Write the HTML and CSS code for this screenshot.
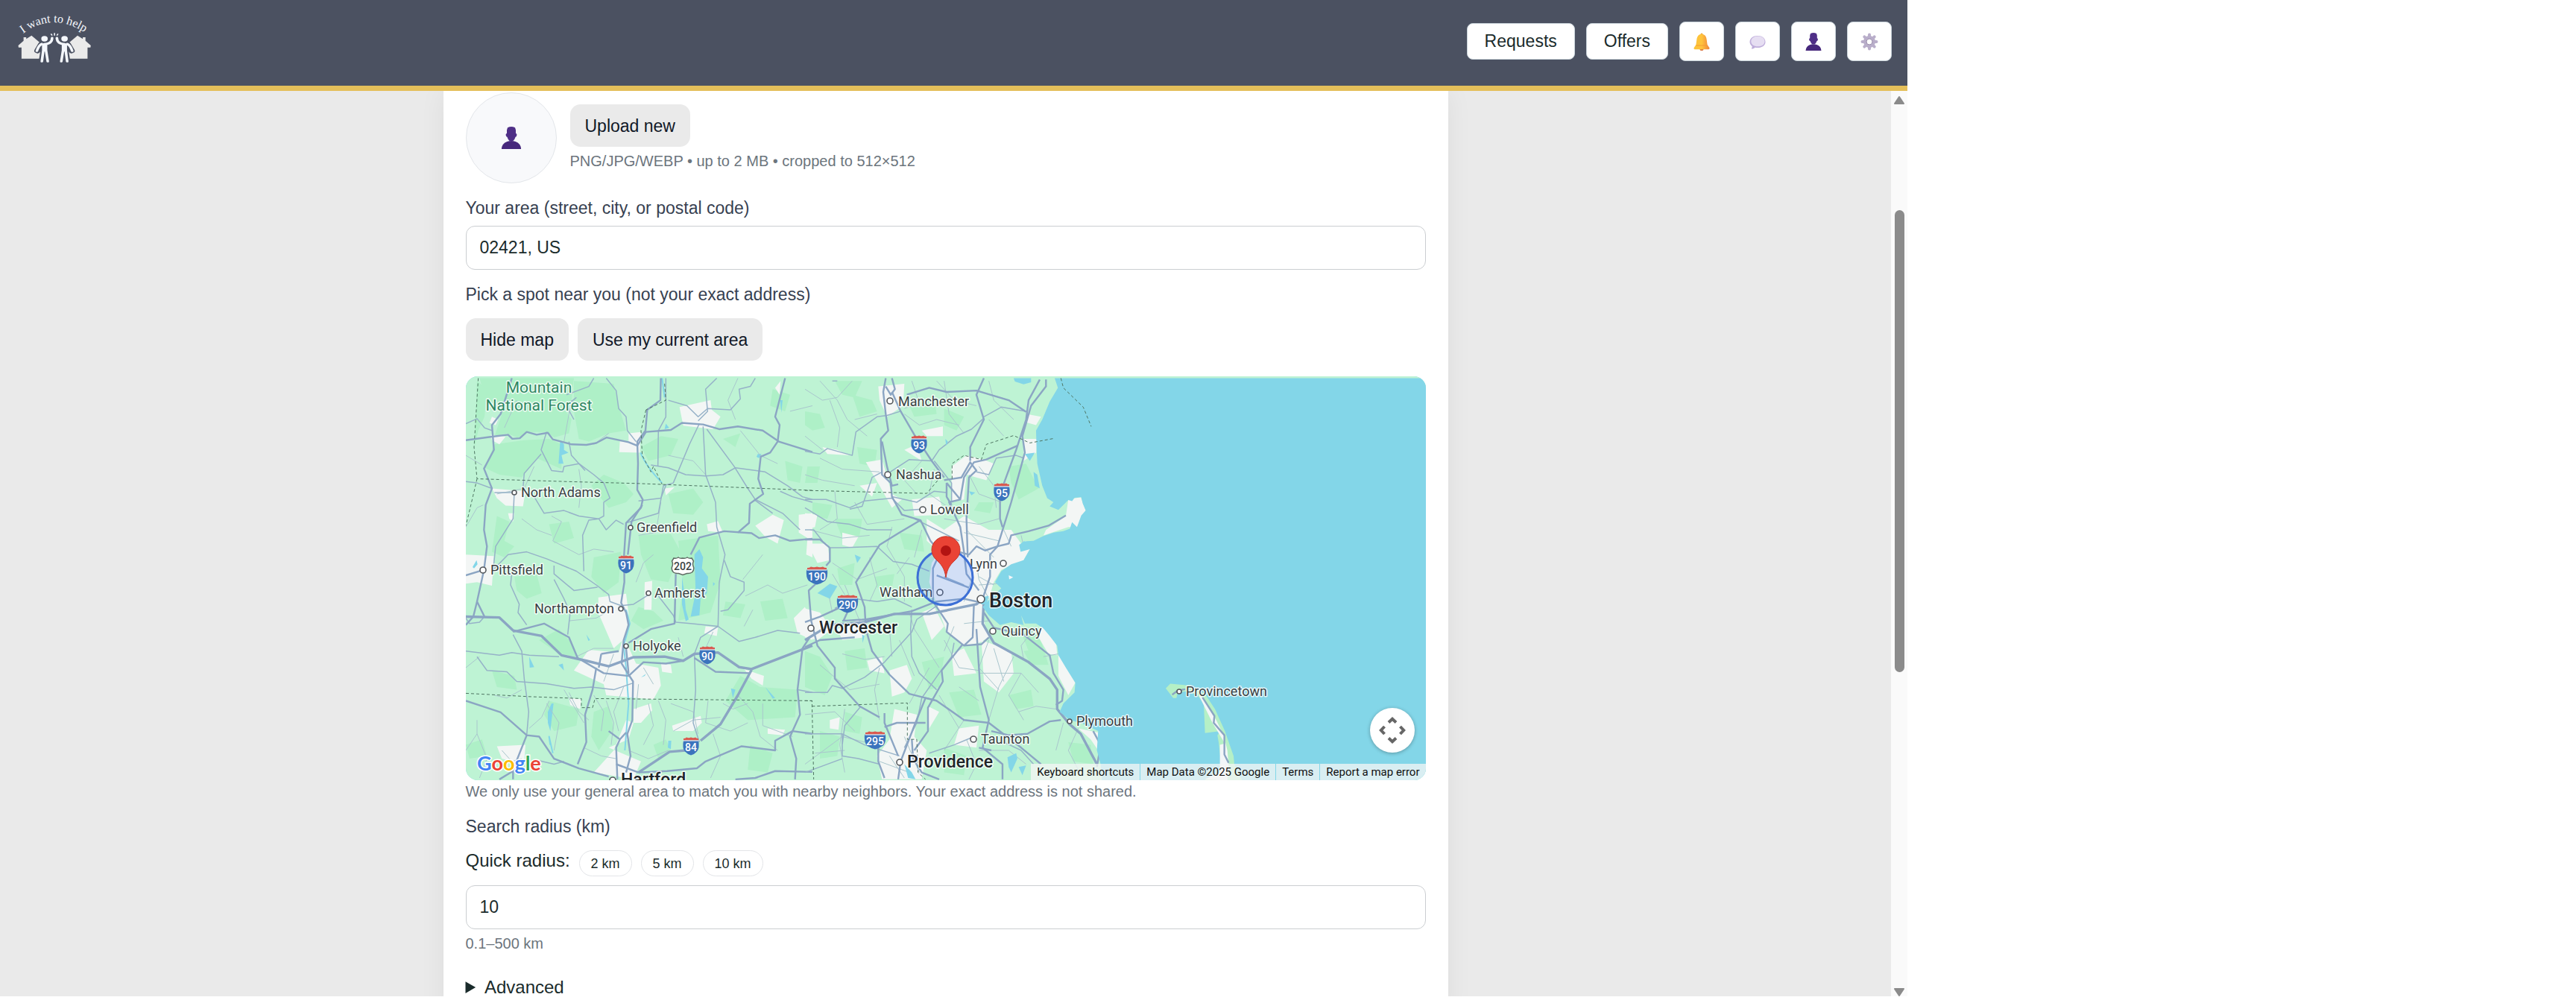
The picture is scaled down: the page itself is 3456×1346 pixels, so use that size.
FILE: index.html
```html
<!DOCTYPE html>
<html lang="en">
<head>
	<meta charset="utf-8">
	<title>I want to help - Profile</title>
	<link rel="stylesheet" href="styles.css">
</head>
<body>

<div class="app">

	<header class="header">
		<a class="logo" href="#" aria-label="I want to help">
			<svg width="98" height="68" viewBox="0 0 98 68">
				<defs><path id="arc" d="M7 27 Q48 -4 95 29"/></defs>
				<text class="logo-text"><textPath href="#arc">I want to help</textPath></text>
				<g transform="translate(-24 -19) scale(.3954 .3333)">
					<g id="half">
						<path fill="#eaeaea" d="M63 194 L62 186 L80 167 V153 H89 V160 L107 146 L137 176 V239 H73 V194Z"/>
						<g fill="none" stroke="#4b5161" stroke-width="21" stroke-linecap="round" stroke-linejoin="round">
							<path d="M139 183 L127 207 M160 181 Q176 178 178 158"/>
							<path d="M148 184 V205 L142 249 M154 205 L162 249"/>
						</g>
						<circle cx="151" cy="159" r="15" fill="#4b5161"/>
						<circle cx="151" cy="159" r="11" fill="#f4f7fc"/>
						<g fill="none" stroke="#f4f7fc" stroke-width="9" stroke-linecap="round" stroke-linejoin="round">
							<path d="M142 180 Q132 184 125 208 M150 181 Q176 180 177 156"/>
							<path d="M147 184 V205 L142 250 M156 184 V205 L162 250"/>
							<path d="M151 182 V206"/>
						</g>
						<path d="M173 139 L177 146" stroke="#f4f7fc" stroke-width="4"/>
					</g>
					<use href="#half" transform="translate(370 0) scale(-1 1)"/>
					<path d="M185 136 V146" stroke="#f4f7fc" stroke-width="4"/>
				</g>
			</svg>
		</a>
		<nav class="nav">
			<a class="nav-link" href="#">Requests</a>
			<a class="nav-link" href="#">Offers</a>
			<button class="nav-icon" type="button" aria-label="Notifications">
				<svg width="24" height="24" viewBox="0 0 24 24">
					<defs><linearGradient id="gold"><stop offset="0" stop-color="#fbc23a"/><stop offset=".5" stop-color="#ffc43c"/><stop offset="1" stop-color="#f0853c"/></linearGradient></defs>
					<circle cx="12" cy="2" r="1.5" fill="#e8a53a"/>
					<ellipse cx="12" cy="22.4" rx="2.4" ry="1.6" fill="#d9743c"/>
					<path d="M12 1.800c-4 0-6.200 3-6.700 7.500L4.400 16l-2.700 4c-.5 1 0 2.200 1 2.200h18.600c1 0 1.500-1.200 1-2.200l-2.700-4-.9-6.700C18.200 4.800 16 1.800 12 1.800z" fill="url(#gold)"/>
					<path d="M4.500 17h15" stroke="#f59b32" stroke-width="1"/>
				</svg>
			</button>
			<button class="nav-icon" type="button" aria-label="Messages">
				<svg width="24" height="24" viewBox="0 0 24 24">
					<path d="M12 4c-6 0-10.500 3.400-10.500 8.200 0 2.300 1.300 4.400 3.200 5.800-.1 1.300-.3 2.400-1 3.500 2.200.2 3.800-.7 4.800-1.800 7.700 1.700 14-2.100 14-7.500C22.500 7.400 18 4 12 4z" fill="#bfaedb"/>
					<path d="M12.500 4.500c-5.500 0-9.200 3-9.200 7s3.700 6.800 9.200 6.800 9-2.800 9-6.800-3.500-7-9-7z" fill="#e6def2"/>
				</svg>
			</button>
			<button class="nav-icon" type="button" aria-label="Profile">
				<svg width="24" height="24" viewBox="0 0 24 24"><g id="bust" fill="#4f2f87"><path d="M8 1Q12-1 16 1l.8 2.500v3.700q1.500.2 1 2.200-.3 1.500-1.300 1.500-.8 2.500-2.500 4.300h-4q-1.700-1.800-2.500-4.300-1 0-1.300-1.500-.5-2 1-2.200V3.500z"/><path d="M1.500 24q.4-6 6-8 2.200-.8 4.500-.8t4.500.8q5.600 2 6 8z" fill="#47287c"/></g></svg>
			</button>
			<button class="nav-icon" type="button" aria-label="Settings">
				<svg width="24" height="24" viewBox="0 0 24 24">
					<g fill="none" stroke="#b9aeca">
						<circle cx="12" cy="12" r="6" stroke-width="4"/>
						<path d="M12 2.500v3M12 18.500v3M2.500 12h3M18.500 12h3M5.300 5.300l2 2M16.700 16.700l2 2M18.700 5.300l-2 2M7.300 16.700l-2 2" stroke-width="4" stroke-linecap="round"/>
					</g>
					<circle cx="12" cy="12" r="4" fill="#fff" stroke="#988baa"/>
				</svg>
			</button>
		</nav>
	</header>

	<div class="body">
		<main class="page">
			<form class="card">

				<div class="avatar-row">
					<div class="avatar"><svg width="30" height="30" viewBox="0 0 24 24"><use href="#bust"/></svg></div>
					<div class="avatar-info">
						<button class="btn" type="button">Upload new</button>
						<p class="help">PNG/JPG/WEBP • up to 2 MB • cropped to 512×512</p>
					</div>
				</div>

				<label class="label" for="area">Your area (street, city, or postal code)</label>
				<input class="input" id="area" type="text" value="02421, US">

				<p class="label">Pick a spot near you (not your exact address)</p>
				<div class="buttons">
					<button class="btn" type="button">Hide map</button>
					<button class="btn" type="button">Use my current area</button>
				</div>

				<div class="map">
					<svg class="map-canvas" viewBox="0 0 1290 542" preserveAspectRatio="xMidYMid slice">
						<defs>
							<g id="shield">
								<path d="M-10-7.500Q-12 3-8 7.500-5 11 0 12.500 5 11 8 7.500 12 3 10-7.500z" fill="#3b73bd"/>
								<path d="M-10-7.500V-10q2.500 0 4-1.500 3 1.300 6 0 3 1.300 6 0 1.500 1.500 4 1.500v2.500z" fill="#d9594f"/>
								<path d="M-10.500-7h21" stroke="#fff"/>
							</g>
							<g id="shield-wide">
								<path d="M-14-7.500Q-15 3-11 7.500-6 11 0 12.500 6 11 11 7.500 15 3 14-7.500z" fill="#3b73bd"/>
								<path d="M-13-7.500V-10q3 0 5-1.500 4 1.300 8 0 4 1.300 8 0 2 1.500 5 1.500v2.500z" fill="#d9594f"/>
								<path d="M-13.500-7h27" stroke="#fff"/>
							</g>
						</defs>
						<rect width="1290" height="542" fill="#bef3d4"/>

						<!-- western half -->
						<g transform="translate(-14 -16) scale(.3333 .37)">
							<g class="wood">
								<path d="M100 50H480L470 130 440 160 470 200 460 250 400 265 370 245 290 245 260 268 210 250 160 262 190 180 130 140z"/>
								<path d="M160 290L280 275 380 270 430 290 430 380 330 340 270 410 180 400 120 375z"/>
								<path d="M480 60L640 70 660 150 690 240 620 250 540 280 500 270 480 170z"/>
								<path d="M90 60L130 90 120 190 95 240 80 300z"/>
								<path d="M550 440L600 400 680 430 720 470 690 500 620 520z"/>
								<path d="M860 470L960 450 1000 500 960 545 880 540z"/>
								<path d="M750 300L830 260 900 270 870 330 780 350z"/>
								<path d="M740 620L870 615 910 680 860 790 790 780 750 690z"/>
								<path d="M560 700L670 680 660 790 600 830 550 770z"/>
								<path d="M170 550L220 570 200 640 240 660 200 700 150 680z"/>
								<path d="M240 770L330 760 350 830 290 850 250 820z"/>
								<path d="M900 640L1060 620 1070 790 1030 900 900 930 920 800z"/>
								<path d="M380 580L460 570 480 630 400 650z"/>
								<path d="M340 1000L420 960 470 1010 490 1060 420 1050z"/>
								<path d="M150 1110L240 1130 250 1180 170 1170z"/>
								<path d="M380 1220L500 1250 490 1310 400 1330 360 1270z"/>
								<path d="M1150 1130L1230 1170 1380 1180 1370 1280 1180 1290 1090 1220z"/>
								<path d="M740 880L800 895 840 930 760 960 710 930z"/>
								<path d="M1090 860L1170 870 1150 920 1080 910z"/>
								<path d="M1080 270L1150 250 1130 300z"/>
								<path d="M1330 350L1400 370 1390 430 1340 420z"/>
								<path d="M560 1260L620 1240 640 1320 580 1400 550 1350z"/>
								<path d="M800 1380L850 1360 870 1400 820 1430z"/>
								<path d="M1230 860L1320 850 1340 920 1250 930z"/>
								<path d="M45 1380L110 1360 130 1420 60 1430z"/>
								<path d="M1190 1380L1280 1410 1260 1480 1180 1470z"/>
								<path d="M1280 90L1350 110 1330 170 1270 150z"/>
							</g>
							<g class="town">
								<path d="M905 155L1030 130 1035 165 1070 190 1040 235 920 222z"/>
								<path d="M700 250L750 245 745 320 662 318 665 280 700 278z"/>
								<path d="M150 450L285 460 275 515 205 512 170 485z"/>
								<path d="M45 690L158 695 150 803 90 790 45 795z"/>
								<path d="M578 845L690 832 700 905 690 990 640 1030 580 905z"/>
								<path d="M480 1110L540 1035 660 1045 680 985 730 1085 820 1100 830 1165 800 1215 610 1200 600 1160z"/>
								<path d="M765 790L795 785 792 890 763 890z"/>
								<path d="M1210 585L1280 545 1325 565 1300 650 1250 625z"/>
								<path d="M1385 545L1440 540V700L1415 690 1420 630 1385 610z"/>
								<path d="M1365 920L1410 880 1440 960V1000L1380 975z"/>
								<path d="M1015 580L1060 568 1080 610 1020 605z"/>
								<path d="M1165 1105L1245 1130 1240 1165 1195 1140z"/>
								<path d="M720 1250L790 1230 795 1255 750 1300 720 1300z"/>
								<path d="M620 1390L700 1360 720 1300 690 1290 640 1400 560 1480 720 1505 750 1440z"/>
								<path d="M875 1310L990 1275 995 1300 960 1330 880 1330z"/>
								<path d="M170 1385L285 1380 280 1440 230 1440 190 1430z"/>
								<path d="M1290 85L1312 60 1308 110z"/>
								<path d="M1260 1320L1330 1325 1320 1345 1260 1340z"/>
								<path d="M150 190L175 200 165 220 140 212z"/>
								<path d="M145 255L205 262 180 290 150 275z"/>
								<path d="M460 1210L510 1215 505 1250 465 1235z"/>
								<path d="M1010 950L1060 955 1055 985 1005 975z"/>
								<path d="M830 1080L870 1090 875 1120 835 1115z"/>
								<path d="M845 450L885 445 850 475z"/>
								<path d="M215 540L240 540 235 570 220 560z"/>
							</g>
							<g class="water">
								<path d="M965 690L985 670 1000 700 995 740 1020 770 1015 830 990 850 985 910 950 915 960 870 970 830z"/>
								<path d="M915 770L925 830 930 890 942 925 930 932 915 870z"/>
								<path d="M425 275L440 290 440 310 458 320 430 330 438 360 418 360z"/>
								<path d="M845 235L850 215 863 230z"/>
								<path d="M72 735L88 710 92 725 78 740z"/>
								<path d="M300 1060L320 1098 302 1100z"/>
								<path d="M418 1090L435 1085 440 1110z"/>
								<path d="M390 1230L398 1230 385 1330 375 1300 375 1260z"/>
								<path d="M750 1135L770 1122 765 1130z"/>
								<path d="M1250 1170L1290 1210 1280 1212z"/>
								<path d="M860 1365L872 1365 870 1395 858 1390z"/>
								<path d="M1310 130L1320 130 1315 175z"/>
								<path d="M1220 325L1235 325 1225 340 1215 335z"/>
								<path d="M1112 1175L1130 1180 1120 1210z"/>
								<path d="M530 980L545 1000 538 1003z"/>
								<path d="M1040 790L1048 795 1040 805z"/>
							</g>
							<path class="river" d="M835 50L845 120M748 320Q770 370 835 430M690 890L705 940 680 1020 690 1100 700 1230 685 1400M385 1380L380 1350 395 1410"/>
							<g class="lane">
								<path d="M45 330L110 365M45 590L90 520 115 510M270 560L330 600 390 620M250 130L200 230M1140 50L1100 130 1130 200M1350 170L1440 150M620 250L560 290"/>
								<path d="M320 370L280 450 170 470M470 130L440 280M500 380L510 440 500 520M390 550L430 570 395 640 500 690 560 670 640 680"/>
								<path d="M1150 240L1230 330 1300 360M860 330L960 350 1010 400M830 500L810 610 740 620M1240 690L1160 780M1170 840L1260 800 1320 830 1420 800"/>
								<path d="M730 790L760 720 800 690M460 930L570 920 610 900M1200 890L1165 950M900 990L920 1060M1040 970L990 1070"/>
								<path d="M560 1200L600 1260 590 1330M780 1230L800 1310 760 1380M820 1220L850 1290 840 1380M610 1220L640 1300 630 1380M870 1230L960 1260 980 1340"/>
								<path d="M1020 1220L1010 1300 1110 1330 1180 1300M1140 1200L1200 1260 1230 1350 1300 1400M1240 1230L1240 1310 1360 1350M1040 1340L1070 1420 1030 1500"/>
								<path d="M370 1230L420 1300 400 1400M460 1190L500 1260 540 1290M300 1320L350 1280 380 1220M90 1340L130 1430 100 1500M45 1400L90 1340 90 1290M190 1400L230 1440 270 1430"/>
								<path d="M680 1170L640 1260 660 1330M740 1160L730 1250M800 1160L760 1100M640 1050L600 1150M700 1400L780 1430 860 1400M1070 1280L960 1290 880 1330"/>
								<path d="M45 1100L100 1060M270 1180L210 1210 160 1200M490 1060L560 1030 640 1030M520 1390L590 1420 650 1430M1180 1230L1120 1250 1080 1230M440 1180L480 1240 520 1300"/>
							</g>
							<g class="road">
								<path d="M45 215L90 197 120 230 150 240M610 50L650 95 660 160 690 190 695 240 730 280M850 50L850 190 820 240 818 370M1055 50L1010 90 1018 170 980 205"/>
								<path d="M860 130L935 150 980 190 1018 160 1110 165 1150 125 1145 90 1190 80 1210 50M985 215L945 290 880 430 840 440 820 540 690 575"/>
								<path d="M1000 225L1010 400 1050 500 1055 590 1088 690 1065 790 1060 950M1015 235L1125 370 1180 450 1210 490 1320 540 1390 600"/>
								<path d="M790 365L860 375 930 400 1010 405 1080 400 1130 375 1250 390 1340 440 1400 480 1440 490M740 495L830 485 850 440"/>
								<path d="M370 245L348 310 390 385 435 390 440 370 500 360 560 400 600 430 625 485 600 500 600 550 580 560 610 600 650 565 680 580"/>
								<path d="M460 280L470 330 525 385M348 325L280 395 275 450M320 480L360 540 440 530 500 550 580 560 540 565 515 620 520 750"/>
								<path d="M160 465H240L235 560 165 660 155 745 215 690 290 680 370 705 490 750 570 800 620 835 625 860 670 875 720 870 790 830"/>
								<path d="M400 730L400 760 480 820 575 808M230 755L225 800 260 870 255 900 290 945M400 780L440 850 465 900 455 980"/>
								<path d="M820 840L880 910 890 935 950 940 1060 950 1145 1005 1210 990 1300 965 1390 975M790 960L700 1010"/>
								<path d="M1085 710L1110 770 1165 790 1165 820 1100 890 1070 895M1060 950L990 990 965 1050 970 1180 960 1300 985 1370"/>
								<path d="M45 1040L180 1055 230 1045 300 1055 420 1060M235 980L270 1040 280 1140 298 1260 290 1345M45 920L60 940 100 935 120 915"/>
								<path d="M90 1060L130 1110 210 1115 250 1150 370 1158 480 1175 550 1170 640 1180 720 1155M1380 1180L1440 1190M450 110L540 80 560 50"/>
								<path d="M1205 490L1280 540M1440 500L1360 480 1310 460M480 200L450 150 490 120M330 1435L400 1450 440 1440M45 425L90 430 150 450"/>
							</g>
							<g class="highway">
								<path d="M830 50L828 130 775 165 768 240 735 280 738 360 735 455 757 490 750 520 690 575 682 690 683 790 670 865 690 900 700 945 680 1000 672 1085 700 1125 718 1150 715 1290 695 1340 708 1420 690 1480"/>
								<path d="M755 510L712 570 697 690M690 1030L700 1120M620 1330L665 1360 690 1335M665 1360L650 1390 655 1505M570 1100L555 1180 525 1270 530 1370 495 1450"/>
								<path d="M45 275L150 262 215 255 232 270 262 268 290 245 330 255 375 248 395 272 470 290 530 292 570 285 612 265 700 282 735 295 770 245 870 238 915 212 1000 218 1065 235 1140 225 1240 240 1305 280 1440 318"/>
								<path d="M230 50L185 180 150 220 158 310 118 378 150 450 125 510 118 600 130 660 118 745 90 860 120 915M90 860L75 915 45 945M45 765L118 745"/>
								<path d="M235 970L360 940 400 960 460 990 495 1065 600 1120 700 1130 760 1080 850 1085 920 1075M590 1050L580 1100M590 1050L660 1040"/>
								<path d="M890 760L885 940 790 960 700 1010M950 690L985 628 1085 605 1195 612 1225 630 1290 620 1350 640 1440 632"/>
								<path d="M1330 50L1290 190 1308 220 1300 280 1270 320 1232 335 1222 415 1242 470 1188 505 1185 575 1140 610M965 1065L1050 1115 1190 1120"/>
								<path d="M45 1220L185 1262 290 1345 340 1350 400 1430 500 1465 620 1495M290 1345L235 1470 235 1505M180 1505L235 1475"/>
								<path d="M740 1480L855 1475 975 1465 1010 1440 1155 1385 1290 1400 1290 1365 1360 1330 1440 1340M1130 1505L1210 1500 1290 1475 1440 1478M650 1450L740 1480"/>
								<path d="M1440 975L1400 1030 1380 1180 1390 1270 1350 1350 1375 1430 1370 1505"/>
							</g>
							<g class="highway wide">
								<path d="M45 915L180 918 235 965 350 985 430 1055 530 1075 620 1095 720 1062 845 1060 920 1075 965 1050 1060 1045 1145 1098 1195 1105 1440 1020"/>
								<path d="M1195 1108L1140 1200 1070 1305 990 1365M930 1400L865 1405 740 1480"/>
							</g>
							<path class="border" d="M95 50L78 300 90 415 450 425 740 432 1440 457M90 415L60 530 45 585M770 165L750 240 755 330 790 390 800 370 835 435M845 70L850 130 770 165M45 1193L300 1205 510 1212 510 1245 555 1245 565 1212 1440 1220"/>
						</g>

						<!-- eastern half -->
						<g transform="translate(456 -16) scale(.3333 .37)">
							<g class="wood">
								<path d="M0 170L60 180 80 230 30 240 0 220z"/>
								<path d="M190 110L270 130 290 170 220 190z"/>
								<path d="M420 150L520 120 530 180 440 190z"/>
								<path d="M120 60L230 60 200 120 150 110z"/>
								<path d="M560 160L640 190 610 240 560 220z"/>
								<path d="M700 500L760 500 745 540 680 530z"/>
								<path d="M820 370L890 360 940 450 860 490 830 430z"/>
								<path d="M210 300L290 310 280 370 220 360z"/>
								<path d="M120 560L230 560 220 620 150 630z"/>
								<path d="M380 610L470 620 480 680 400 670z"/>
								<path d="M130 740L200 720 190 800 140 800z"/>
								<path d="M280 770L360 760 350 810 290 810z"/>
								<path d="M0 1040L60 1060 110 1130 80 1200 0 1170z"/>
								<path d="M160 1040L240 1030 250 1100 170 1110z"/>
								<path d="M470 1080L560 1060 540 1170 500 1180z"/>
								<path d="M580 1190L680 1180 710 1270 620 1280z"/>
								<path d="M880 1040L960 1030 980 1090 910 1090z"/>
								<path d="M1060 1370L1150 1380 1160 1450 1080 1440z"/>
								<path d="M160 1260L230 1280 220 1340 160 1330z"/>
								<path d="M60 1330L140 1350 130 1420 60 1430z"/>
								<path d="M560 1390L650 1420 640 1490 560 1480z"/>
								<path d="M870 970L940 980 960 1030 900 1040z"/>
								<path d="M30 500L110 510 90 560 30 550z"/>
								<path d="M820 1200L910 1180 920 1240 850 1250z"/>
								<path d="M10 370L60 370 50 430 0 430z"/>
							</g>
							<g class="town">
								<path d="M295 80L400 70 395 150 330 190 300 130z"/>
								<path d="M245 355L310 345 350 470 390 490 350 520 300 440z"/>
								<path d="M430 490L540 480 560 545 440 550z"/>
								<path d="M590 370L650 330 720 345 760 360 730 420 650 400 640 490 590 500 590 440z"/>
								<path d="M490 560L560 600 640 550 780 620 780 700 890 640 905 670 880 710 790 745 760 790 740 850 720 870 720 930 740 990 700 1010 640 1020 570 970 530 870 500 790 510 720 540 680 490 640z"/>
								<path d="M640 600L830 600 870 650 870 700 790 740 700 770 640 700z"/>
								<path d="M970 600L1050 550 1060 490 1110 482 1130 530 1095 590 1060 590 960 620z"/>
								<path d="M960 940L1010 1000 1015 1055 980 1050 940 990z"/>
								<path d="M710 1000L830 1040 840 1120 780 1190 720 1150z"/>
								<path d="M590 1050L640 1030 690 1120 600 1130z"/>
								<path d="M340 1110L410 1090 430 1140 400 1190 350 1205z"/>
								<path d="M0 885L60 900 110 960 50 1000 0 990z"/>
								<path d="M130 960L230 920 240 990 150 1000z"/>
								<path d="M290 1420L340 1360 360 1250 450 1270 440 1350 490 1400 470 1505 310 1505z"/>
								<path d="M620 1320L700 1310 690 1390 600 1380z"/>
								<path d="M1020 1050L1088 1155 1060 1200 1020 1130z"/>
								<path d="M470 240L555 225 555 260 490 260z"/>
								<path d="M880 270L935 270 930 320 880 350z"/>
								<path d="M890 180L950 190 930 220 890 210z"/>
								<path d="M100 1290L140 1280 135 1325 100 1320z"/>
								<path d="M0 540L50 545 40 590 0 600z"/>
								<path d="M10 650L90 650 100 710 50 720z"/>
								<path d="M250 1075L310 1060 320 1120 260 1110z"/>
								<path d="M150 610L215 625 190 665 150 655z"/>
								<path d="M400 310L450 290 470 350z"/>
								<path d="M1100 1320L1180 1335 1180 1400 1150 1360z"/>
								<path d="M470 900L520 880 560 950 510 1000z"/>
								<path d="M495 1240L540 1260 500 1320z"/>
								<path d="M70 300L130 310 180 330 90 325z"/>
								<path d="M220 440L290 430 270 480z"/>
							</g>
							<g class="lane">
								<path d="M0 90L70 130 130 120 190 60M100 130L140 230 130 300M0 260L70 310M60 60L130 130 170 200 250 260M200 200L290 180M430 60L460 140 400 160M530 60L600 130 690 150"/>
								<path d="M400 180L460 220 530 200 620 220M560 60L580 180 640 250M740 60L760 130 840 200M740 200L800 260M470 350L400 420 450 470M520 380L500 470 580 520"/>
								<path d="M60 340L150 380 300 390M0 400L70 420 200 440M120 460L130 560 60 600M200 500L250 580 400 560M20 600L150 630 260 620M560 560L700 580 780 560M640 610L780 640"/>
								<path d="M660 400L700 470 790 500M700 370L760 440 770 520M650 600L760 700M700 770L760 800M700 800L780 795M690 720L700 780 740 850M640 940L740 930M670 780L640 860"/>
								<path d="M110 720L210 780 330 740M110 760L170 850M260 700L290 800 260 860M330 660L400 770 400 860M150 1050L240 1070 320 1060M420 900L440 960 540 1100M340 960L350 1060"/>
								<path d="M380 1000L440 1130M60 1090L180 1180 300 1160M300 1100L280 1180 300 1290M500 1100L420 1230M560 1000L620 1100 700 1110M600 950L560 1040M740 1000L700 1100 780 1180"/>
								<path d="M700 1120L870 1120 940 1190M760 1030L800 1150M840 1060L780 1170 740 1290M870 1120L820 1200 880 1290M620 1170L700 1220M540 1200L620 1320M640 1290L560 1400"/>
								<path d="M0 1270L120 1260 200 1330M40 1410L160 1400M0 1450L150 1350 240 1370M160 1250L140 1380 160 1480M400 1350L460 1480M300 1440L420 1480M340 1420L400 1500M700 1400L820 1400 890 1450"/>
								<path d="M930 950L870 1020 880 1070M1020 1050L960 1060M1010 1250L930 1240 860 1260M1100 1320L1060 1400 1100 1470M1040 1300L1010 1400M650 1360L690 1450 660 1505"/>
								<path d="M160 800L220 930 200 980M90 810L110 900M350 590L330 660M420 700L370 760M470 600L440 700M580 620L560 680M800 600L830 660M870 620L880 660"/>
							</g>
							<g class="road">
								<path d="M0 315L60 325 90 305 190 330 205 245 290 190 330 185 385 170M0 490L85 490 180 520 240 495 350 485 400 530 470 525M180 525L230 515 270 410 310 390"/>
								<path d="M720 195L670 235 610 260 540 310 510 350 420 345 335 395M690 95L820 130M720 190L790 155 890 170M690 390L740 400 770 340 850 330 880 340"/>
								<path d="M130 60L110 60M350 480L450 500 520 460 570 465M520 350L590 430 590 500M0 520L90 570 180 580 250 600 350 600M440 560L530 600 620 640"/>
								<path d="M100 665L150 665 290 660 355 715 430 725 500 750M560 770L640 800M0 600L35 600 70 640M0 1190L90 1190 110 1165 150 1175 240 1135 320 1080 430 970 450 925 540 870"/>
								<path d="M430 890L425 960 430 1060 460 1120 530 1180M0 1340L150 1340 240 1380 380 1420M150 1340L150 1420 215 1430 300 1450M225 1240L160 1310 150 1380"/>
								<path d="M0 1480L150 1430M500 1410L600 1380 680 1350M920 1450L870 1400 800 1370M600 1010L590 1060 540 1120 470 1210 450 1300 400 1390M120 885L200 850 290 860 360 850 430 880"/>
							</g>
							<g class="highway">
								<path d="M325 50L315 100 325 180 335 240 305 270 310 400 345 430 350 480 390 545 465 565 505 640 560 700M350 50L362 90 345 110 325 80M410 110L500 85 570 100 690 95 820 130 890 172"/>
								<path d="M350 100L385 170 440 255 510 350 560 410M310 280L330 370 350 440 375 435M720 50L690 110 720 200 665 300 665 350"/>
								<path d="M970 55L970 80 910 150 875 260 885 320 830 500 775 660 745 690 745 770 715 850M945 55L900 130 890 200 850 310 785 470 785 560 795 590"/>
								<path d="M855 295L730 345 680 355 640 410 625 490 580 500 625 590 640 680 650 760 700 820M560 420L630 410 665 355 690 385 660 410 650 560 655 700M570 430L570 480 590 510M570 430L625 490"/>
								<path d="M100 665V715L85 730M0 635L60 635 100 665M465 565L380 610 300 655 205 790 240 880 245 960 270 1040 340 1125 420 1195 530 1220 640 1290 740 1300 870 1390 950 1450"/>
								<path d="M775 660L725 675 690 660 660 690 620 680 540 690 515 740 515 860 575 940 570 970 640 1020 710 1015 740 990M530 765L660 810M775 660L820 650 830 620 900 605 980 585 1050 548"/>
								<path d="M50 790L15 820 25 930 50 1020 120 1100 120 1140 220 1240 300 1280M0 935L60 915 170 870M150 930L245 925 430 895 530 860 640 850 715 865M170 900L155 930M0 1025L60 1000 200 990"/>
								<path d="M720 900L760 955 880 980 985 1055 1000 1120 1040 1180 1035 1220 1010 1235M680 870L675 990 640 1020M690 960L705 1170 740 1290 715 1390 795 1450 795 1505"/>
								<path d="M635 1015L550 1110 555 1150 495 1245 495 1330 440 1400M530 1220L485 1210 440 1310 385 1440 375 1505M320 1265V1300L375 1420M320 1315L370 1300 485 1300M295 1390L295 1440 320 1500M750 1330L820 1345 895 1340 985 1295 1030 1290M430 1360L435 1430 470 1480 540 1505"/>
								<path d="M750 1400L700 1390M1160 1330L1190 1380 1175 1460"/>
							</g>
							<g class="highway wide">
								<path d="M0 1000L100 945 240 935 360 905 500 905 690 870 710 855M720 855L715 940 760 1010 900 1080 985 1140 1015 1180 1015 1250 1065 1305 1110 1340 1175 1450"/>
							</g>
							<g class="water">
								<path d="M1005 50L1018 85 985 135 955 200 930 240 932 300 935 360 955 440 975 485 1000 500 985 515 1020 528 1060 492 1075 496 1085 484 1112 482 1118 505 1130 530 1112 548 1095 590 1075 572 1066 596 1040 605 1000 610 960 622 920 640 880 642 862 655 868 680 905 670 880 710 830 725 790 750 765 790 790 812 770 830 745 850 715 880 740 910 785 945 830 935 880 945 870 910 885 940 930 940 960 958 985 985 1015 1020 1020 1055 1050 1100 1088 1155 1085 1190 1040 1230 1025 1260 1065 1290 1110 1300 1180 1330 1175 1400 1190 1450 1195 1510 2510 1510V50z"/>
								<path d="M840 50H910V65L880 72 845 62z"/>
								<path d="M885 325L925 320 905 350z"/>
								<path d="M920 390L935 400 945 450 925 440z"/>
								<path d="M50 830L100 795 130 805 100 850z"/>
								<path d="M815 1425L850 1410 855 1430 830 1480 820 1460z"/>
								<path d="M860 1460L890 1455 875 1490z"/>
								<path d="M660 460L685 465 670 475z"/>
								<path d="M200 690L225 700 210 720z"/>
								<path d="M565 270L575 280 568 295z"/>
								<path d="M400 1450L430 1480 445 1505 415 1500z"/>
								<path d="M230 980L240 985 232 1010z"/>
								<path d="M700 845L740 840 730 870 710 870z"/>
							</g>
							<path d="M820 765L838 772 822 780z" fill="#f3f6f8"/>
							<path class="border" d="M0 457L490 468 535 420M592 415V360L640 330 710 345 730 290 840 258 905 285 1005 268M1030 50L1040 85 1120 155 1152 225M0 1220H28L35 1505M28 1240L412 1228V1360H450L455 1480 485 1505"/>
						</g>

						<!-- Cape Cod -->
						<g transform="translate(876 -16) scale(.3333 .37)">
							<path d="M192 1175L210 1158 290 1165 350 1195 390 1250 430 1330 465 1420 468 1450 500 1510 340 1510 400 1490 415 1450 405 1370 400 1345 412 1330 350 1337 345 1230 320 1200 280 1185 240 1190 235 1210 222 1210z" fill="#b5f0c6"/>
							<path d="M325 1200L345 1210 395 1290 425 1345 440 1400 445 1450 440 1510 350 1505 410 1480 410 1380 430 1375 380 1300z" fill="#f3f6f8"/>
							<path class="highway" d="M218 1198L240 1183 270 1178M340 1208L388 1275 385 1300 428 1345 428 1415 445 1445"/>
						</g>

						<use href="#shield" x="216" y="252"/><text class="route" x="216" y="259">91</text>
						<use href="#shield" x="325" y="374"/><text class="route" x="325" y="381">90</text>
						<use href="#shield" x="303" y="496"/><text class="route" x="303" y="503">84</text>
						<use href="#shield" x="609" y="91"/><text class="route" x="609" y="98">93</text>
						<use href="#shield" x="720" y="155"/><text class="route" x="720" y="162">95</text>
						<use href="#shield-wide" x="472" y="267"/><text class="route" x="472" y="274">190</text>
						<use href="#shield-wide" x="513" y="305"/><text class="route" x="513" y="312">290</text>
						<use href="#shield-wide" x="550" y="488"/><text class="route" x="550" y="495">295</text>
						<path d="M280 244q3 1 6-1 3 2 6 1 3 1 6-1 3 2 6 1l2.500 4q-2 4 0 8 1 4-2 7-3 2-7 1.500l-5.500 2-5.500-2q-4 .5-7-1.500-3-3-2-7 2-4 0-8z" fill="#fff" stroke="#5f6a63" stroke-width="1.500"/>
						<text class="route us" x="292" y="260">202</text>

						<g class="place">
							<circle cx="66" cy="156" r="3"/><circle cx="222" cy="203" r="3"/><circle cx="24" cy="260" r="4"/><circle cx="246" cy="291" r="3"/>
							<circle cx="209" cy="312" r="3"/><circle cx="216" cy="362" r="3"/><circle cx="198" cy="542" r="4"/><circle cx="570" cy="33" r="4"/>
							<circle cx="567" cy="132" r="4"/><circle cx="614" cy="179" r="4"/><circle cx="722" cy="251" r="4"/><circle cx="637" cy="290" r="4"/>
							<circle cx="692" cy="299" r="5"/><circle cx="464" cy="338" r="4"/><circle cx="708" cy="342" r="4"/><circle cx="811" cy="463" r="3"/>
							<circle cx="682" cy="487" r="4"/><circle cx="583" cy="518" r="4"/><circle cx="958" cy="423" r="3"/>
						</g>
						<g class="names">
							<text class="park" x="99" y="22">Mountain</text>
							<text class="park" x="99" y="46">National Forest</text>
							<text x="75" y="162">North Adams</text>
							<text x="230" y="209">Greenfield</text>
							<text x="34" y="266">Pittsfield</text>
							<text x="254" y="297">Amherst</text>
							<text x="93" y="318">Northampton</text>
							<text x="225" y="368">Holyoke</text>
							<text class="city" x="209" y="549">Hartford</text>
							<text x="581" y="40">Manchester</text>
							<text x="578" y="138">Nashua</text>
							<text x="624" y="185">Lowell</text>
							<text x="677" y="258">Lynn</text>
							<text x="556" y="296">Waltham</text>
							<text class="metro" x="703" y="310">Boston</text>
							<text class="city" x="475" y="345">Worcester</text>
							<text x="719" y="348">Quincy</text>
							<text x="820" y="469">Plymouth</text>
							<text x="692" y="493">Taunton</text>
							<text class="city" x="593" y="525">Providence</text>
							<text x="967" y="429">Provincetown</text>
						</g>

						<circle cx="644" cy="270" r="37" fill="#3b78ff" fill-opacity=".18" stroke="#3c6fd6" stroke-width="3"/>
						<path d="M645 270C643 256 638 252 632 246a19 18 0 1 1 26 0C652 252 647 256 645 270z" fill="#ea4335" stroke="#c5362b"/>
						<circle cx="645" cy="234" r="7" fill="#b31412"/>

						<text class="google" x="16" y="529"><tspan fill="#4285f4">G</tspan><tspan fill="#ea4335">o</tspan><tspan fill="#fbbc04">o</tspan><tspan fill="#4285f4">g</tspan><tspan fill="#34a853">l</tspan><tspan fill="#ea4335">e</tspan></text>
					</svg>

					<button class="map-pan" type="button" aria-label="Map camera controls">
						<svg width="36" height="36" viewBox="0 0 36 36" fill="none" stroke="#666" stroke-width="4">
							<path d="M13 7.500L18 2.800 23 7.500M13 28.500L18 33.200 23 28.500M7.500 13L2.800 18 7.500 23M28.500 13L33.200 18 28.500 23"/>
						</svg>
					</button>
					<div class="map-links">
						<button type="button">Keyboard shortcuts</button>
						<span>Map Data ©2025 Google</span>
						<a href="#">Terms</a>
						<a href="#">Report a map error</a>
					</div>
				</div>
				<p class="help map-help">We only use your general area to match you with nearby neighbors. Your exact address is not shared.</p>

				<label class="label" for="radius">Search radius (km)</label>
				<div class="quick">
					<span>Quick radius:</span>
					<button class="chip" type="button">2 km</button>
					<button class="chip" type="button">5 km</button>
					<button class="chip" type="button">10 km</button>
				</div>
				<input class="input" id="radius" type="text" inputmode="decimal" value="10">
				<p class="help radius-help">0.1–500 km</p>

				<details class="advanced">
					<summary>Advanced</summary>
				</details>
			</form>
		</main>

		<div class="scrollbar" aria-hidden="true">
			<svg width="16" height="12" viewBox="0 0 16 12"><path d="M8 2L14 11H2z" fill="#8b8b8b" stroke="#8b8b8b" stroke-width="2" stroke-linejoin="round"/></svg>
			<div class="track"><div class="thumb"></div></div>
			<svg width="16" height="12" viewBox="0 0 16 12"><path d="M8 11L14 2H2z" fill="#8b8b8b" stroke="#8b8b8b" stroke-width="2" stroke-linejoin="round"/></svg>
		</div>
	</div>

</div>

</body>
</html>
```

FILE: styles.css
```css
* {
	box-sizing: border-box;
}
body {
	margin: 0;
	background-color: #fff;
	color: #1a2b2b;
	font-family: "Liberation Sans", Arial, sans-serif;
	font-size: 23px;
	line-height: 28px;
}
p {
	margin: 0;
}
button,
input {
	font: inherit;
	color: inherit;
}
.app {
	display: flex;
	flex-direction: column;
	max-width: 2559px;
	height: calc(100vh - 9px);
	overflow: hidden;
}

/* header */
.header {
	display: flex;
	flex: none;
	justify-content: space-between;
	align-items: flex-start;
	padding: 18px 21px 29px 24px;
	background-color: #4b5161;
	border-bottom: 7px solid #e4bf5a;
}
.logo svg {
	display: block;
	overflow: visible;
}
.logo-text {
	fill: #f4f7fc;
	font-family: "Liberation Serif", "Times New Roman", serif;
	font-size: 16px;
}
.nav {
	display: flex;
	align-items: center;
	gap: 15px;
	padding-top: 11px;
}
.nav-link,
.nav-icon {
	background-color: #fff;
	border: 1px solid #c9d3da;
	border-radius: 8px;
}
.nav-link {
	padding: 10px 23px;
	color: #1a2b2b;
	line-height: 27px;
	text-decoration: none;
}
.nav-icon {
	display: flex;
	align-items: center;
	justify-content: center;
	width: 60px;
	height: 53px;
	padding: 0;
}

/* page */
.body {
	display: flex;
	flex: 1;
	min-height: 0;
}
.page {
	flex: 1;
	overflow: hidden;
	background-color: #eaeaea;
}
.card {
	max-width: 1348px;
	min-height: 100%;
	margin: 0 auto;
	padding: 2px 30px 30px;
	background-color: #fff;
	box-shadow: 0 0 34px rgba(0, 0, 0, 0.06);
}
.avatar-row {
	display: flex;
	align-items: center;
	gap: 18px;
}
.avatar {
	display: flex;
	align-items: center;
	justify-content: center;
	width: 122px;
	height: 122px;
	background-color: #f8f9fb;
	border: 1px solid #e3e6ea;
	border-radius: 50%;
}
.btn {
	height: 57px;
	padding: 0 20px;
	background-color: #eaeaea;
	border: 0;
	border-radius: 14px;
	color: #111827;
}
.help {
	color: #6c757d;
	font-size: 20px;
	line-height: 27px;
}
.avatar-info .help {
	margin-top: 6px;
}
.label {
	display: block;
	margin: 19px 0 10px;
	color: #374151;
}
.input {
	display: block;
	width: 100%;
	height: 59px;
	padding: 0 18px;
	background-color: #fff;
	border: 1px solid #cbced1;
	border-radius: 12px;
}
.buttons {
	display: flex;
	gap: 12px;
	margin: 18px 0 21px;
}

/* map */
.map {
	position: relative;
	height: 542px;
	overflow: hidden;
	background-color: #83d6e8;
	border-radius: 16px;
	font-family: Roboto, sans-serif;
}
.map-canvas {
	display: block;
	width: 100%;
	height: 100%;
}
.map-canvas path {
	vector-effect: non-scaling-stroke;
}
.wood {
	fill: #aef0c7;
}
.town {
	fill: #f3f6f5;
}
.water {
	fill: #83d6e8;
}
.river,
.lane,
.road,
.highway,
.border {
	fill: none;
	stroke-linejoin: round;
}
.river {
	stroke: #83d6e8;
	stroke-width: 2px;
}
.lane {
	stroke: #a9c6cd;
	stroke-width: 1px;
}
.road {
	stroke: #96b2c8;
	stroke-width: 1.5px;
}
.highway {
	stroke: #8ba5c3;
	stroke-width: 2.4px;
}
.wide {
	stroke-width: 3.4px;
}
.border {
	stroke: #4e7562;
	stroke-width: 1px;
	stroke-dasharray: 4 3;
}
.place {
	fill: #fff;
	stroke: #55595d;
	stroke-width: 1.6px;
}
.names {
	fill: #3a3f44;
	stroke: #fff;
	stroke-width: 3px;
	stroke-opacity: 0.8;
	stroke-linejoin: round;
	paint-order: stroke;
	font-size: 18px;
}
.names .park {
	fill: #2f8763;
	font-size: 21px;
	text-anchor: middle;
}
.names .city {
	fill: #202428;
	font-size: 23px;
	font-weight: 500;
}
.names .metro {
	fill: #202428;
	font-size: 27px;
	font-weight: 500;
}
.route {
	fill: #fff;
	font-size: 14px;
	font-weight: 500;
	text-anchor: middle;
}
.us {
	fill: #3a3f44;
}
.google {
	stroke: #fff;
	stroke-width: 3px;
	paint-order: stroke;
	font-family: Lato, sans-serif;
	font-size: 27px;
	font-weight: 700;
}
.map-pan {
	position: absolute;
	right: 15px;
	bottom: 37px;
	display: flex;
	align-items: center;
	justify-content: center;
	width: 60px;
	height: 60px;
	padding: 0;
	background-color: #fff;
	border: 0;
	border-radius: 50%;
	box-shadow: 0 1px 5px rgba(0, 0, 0, 0.3);
}
.map-links {
	position: absolute;
	right: 0;
	bottom: 0;
	display: flex;
	gap: 1px;
	color: #111;
	font-size: 15px;
	line-height: 22px;
}
.map-links > * {
	padding: 0 8px;
	background-color: rgba(245, 245, 245, 0.75);
	border: 0;
	color: inherit;
	text-decoration: none;
}
.map-help {
	margin-top: 2px;
}

/* radius */
.quick {
	display: flex;
	align-items: flex-start;
	gap: 12px;
	margin: 18px 0 12px;
	font-size: 24px;
}
.chip {
	height: 35px;
	padding: 0 15px;
	background-color: #fff;
	border: 1px solid #e3e5e8;
	border-radius: 18px;
	font-size: 18px;
	line-height: 20px;
}
.radius-help {
	margin-top: 6px;
}
.advanced {
	margin-top: 31px;
	font-size: 24px;
}

/* scrollbar */
.scrollbar {
	display: flex;
	flex-direction: column;
	align-items: center;
	width: 22px;
	padding-top: 6px;
	background-color: #fafafa;
}
.scrollbar svg {
	flex: none;
}
.track {
	flex: 1;
	padding-top: 142px;
}
.thumb {
	width: 13px;
	height: 620px;
	background-color: #8b8b8b;
	border-radius: 7px;
}
```
